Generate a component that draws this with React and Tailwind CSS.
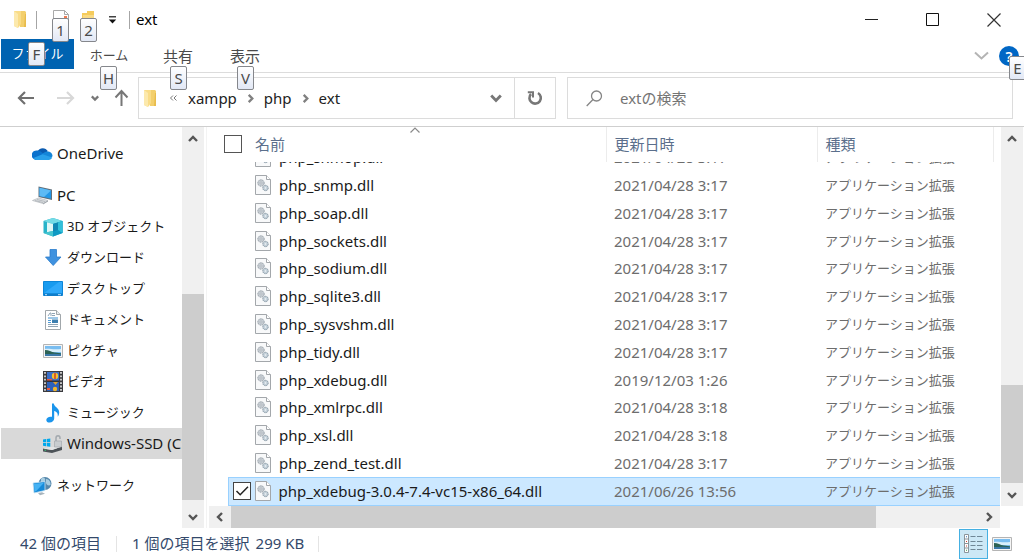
import React from "react";

const KANA = "text-[13px]";

function KeyTip({ children, className }) {
  return (
    <span
      className={`absolute z-10 flex h-6 w-[17px] items-center justify-center rounded-[2px] border border-[#85878c] bg-linear-to-b from-white to-[#e2e8f5] text-[15px] leading-none text-[#4a4a4a] ${className}`}
    >
      {children}
    </span>
  );
}

function Chevron({ dir = "down", size = 10, stroke = 2.4, color = "#555" }) {
  const d = {
    down: "M1 3l4 4 4-4",
    up: "M1 7l4-4 4 4",
    left: "M7 1L3 5l4 4",
    right: "M3 1l4 4-4 4",
  }[dir];
  return (
    <svg width={size} height={size} viewBox="0 0 10 10" fill="none" stroke={color} strokeWidth={stroke} className="overflow-visible">
      <path d={d} />
    </svg>
  );
}

function FolderIcon() {
  return (
    <svg width="15" height="19" viewBox="0 0 15 19" aria-hidden="true">
      <path d="M4 1h8l1 1v15l-6 0z" fill="#f3cf6c" />
      <path d="M12 4h1v13h-2z" fill="#e8bc4c" />
      <path d="M1 1h7v13l-3 4-4-2z" fill="#f9dc88" />
      <path d="M1 1l4 3v14l-4-2z" fill="#fce9ad" />
    </svg>
  );
}

function DllIcon() {
  return (
    <svg width="16" height="20" viewBox="0 0 16 20" aria-hidden="true" className="shrink-0">
      <path d="M.5.5h11l4 4v15H.5z" fill="#f8f9fa" stroke="#a3a7ab" />
      <path d="M11.5.5v4h4" fill="#fff" stroke="#a3a7ab" />
      <circle cx="6" cy="8" r="3.2" fill="#c8ced4" stroke="#97a0a8" strokeDasharray="1.6 .7" />
      <circle cx="6" cy="8" r="1" fill="#f4f6f8" stroke="#97a0a8" strokeWidth=".6" />
      <circle cx="10.5" cy="13" r="2.7" fill="#c3d0d9" stroke="#8797a3" strokeDasharray="1.4 .6" />
      <circle cx="10.5" cy="13" r=".8" fill="#f4f6f8" />
    </svg>
  );
}

function PictureIcon() {
  return (
    <svg width="20" height="16" viewBox="0 0 20 16" aria-hidden="true">
      <path d="M.5 1.5h19v13H.5z" fill="#f5f5f5" stroke="#b4b4b4" />
      <path d="M2 3h16v10H2z" fill="#79bdf0" />
      <path d="M2 6c4-1 7 1 16 0v3H2z" fill="#d9effb" />
      <path d="M2 7c4 0 6 2 10 2.500l6 .8V13H2z" fill="#2c6254" />
      <path d="M2 11c5 0 10-1 16 .3V13H2z" fill="#3a78a8" />
    </svg>
  );
}

const icons = {
  onedrive: (
    <svg width="22" height="15" viewBox="0 0 22 15">
      <path d="M6 5a6 6 0 0 1 10.5 0l-3 4-8-1z" fill="#0a5bb0" />
      <path d="M5.500 4.300a5 5 0 0 1 3.500 1l7 5-12 4A5 5 0 0 1 5.500 4.300z" fill="#0b72cd" />
      <path d="M16.200 5.300c3 0 5.300 2 5.300 5l-3 3-8-5c2-2 3.500-3 5.700-3z" fill="#1485d8" />
      <path d="M1.500 12.300L11 8.200l10.200 3.600c-.6 1.600-2 2.500-3.700 2.500H5c-1.500 0-2.700-.7-3.500-2z" fill="#29a0ea" />
    </svg>
  ),
  pc: (
    <svg width="21" height="19" viewBox="0 0 21 19">
      <path d="M6.500.5L20 3.500V14L6.500 11z" fill="#60707c" />
      <path d="M7.500 1.800L19 4.400v8.300L7.500 10.100z" fill="#2397e6" />
      <path d="M7.500 1.800L19 4.400l-7 6.700-4.500-1z" fill="#5cbaf5" />
      <path d="M.5 14.500l6-2.500 9.500 2.500-5 3z" fill="#dfe2e4" stroke="#b1b6ba" strokeWidth=".7" />
      <path d="M3 14.500l8 2M5 13.500l8 2" stroke="#a5abb0" strokeWidth=".7" />
      <path d="M11 17.500l5-3v1l-5 3z" fill="#9ba2a8" />
    </svg>
  ),
  cube: (
    <svg width="20" height="20" viewBox="0 0 20 20">
      <path d="M.5 4L10 1l9.500 3v12L10 19.500.5 16z" fill="#27b3c9" />
      <path d="M.5 4L10 1l9.500 3L10 7z" fill="#74dbe6" />
      <path d="M10 7l9.500-3v12L10 19.500z" fill="#0f9ac4" />
      <path d="M15 5.500L19.500 4v12L15 13z" fill="#32c0da" />
      <path d="M4 5.200l6 1.800v7l-6 1.300z" fill="#e0f7f6" />
      <path d="M10 7l5-1.500V13l-5 1.500z" fill="#1187b4" />
      <path d="M.5 16L4 15.300l6-1.300v5.500z" fill="#46c5cf" />
    </svg>
  ),
  download: (
    <svg width="20" height="19" viewBox="0 0 20 19">
      <path d="M7 1.500h6.500V9H18l-7.800 8.500L2.500 9H7z" fill="#3f92df" stroke="#2b7ccc" strokeWidth=".8" />
    </svg>
  ),
  desktop: (
    <svg width="20" height="16" viewBox="0 0 20 16">
      <path d="M.5.5h19v14H.5z" fill="#189bef" stroke="#0d86d8" />
      <path d="M1 12L16 1h3v11z" fill="#2fa9fa" />
      <path d="M1 12.500h18V15H1z" fill="#0f7cc9" />
      <path d="M2 13.700h2M15 13.700h3" stroke="#bfe5ff" />
    </svg>
  ),
  document: (
    <svg width="20" height="20" viewBox="0 0 20 20">
      <path d="M2.500.5h11l4 4v15h-15z" fill="#fff" stroke="#a1a7ab" />
      <path d="M13.500.5v4h4" fill="#e9edf0" stroke="#a1a7ab" />
      <path d="M5 6l2-3h1v3M9 3.500h3M9 5.500h3M5 16.500h10M5 14.500h10" stroke="#91a5b5" fill="none" />
      <path d="M5 8h10" stroke="#3b8fd0" />
      <path d="M9 9.500h6V13H9z" fill="#3d7faf" />
      <path d="M5 10.500h3M5 12.500h3" stroke="#4f9ad5" />
    </svg>
  ),
  picture: <PictureIcon />,
  video: (
    <svg width="20" height="21" viewBox="0 0 20 21">
      <path d="M0 0h20v21H0z" fill="#3b3b3f" />
      <path d="M2 1v20M18 1v20" stroke="#d8d8d8" strokeWidth="1.8" strokeDasharray="1.8 1.6" />
      <path d="M4 1h12v9H4z" fill="#3a6fc8" />
      <path d="M4 11h12v9H4z" fill="#2d61bb" />
      <path d="M4 8h5v2H4z" fill="#e9573f" />
      <circle cx="12" cy="5" r="3.2" fill="#f2c12e" />
      <path d="M12 2v6" stroke="#cc3e2e" strokeWidth="1.5" />
      <path d="M4 9.500h12v1.500H4z" fill="#303238" />
      <path d="M10 11h5l-2.500 3z" fill="#e0a02c" />
      <path d="M4 17h3v2H4z" fill="#e9573f" />
      <circle cx="12" cy="18" r="2.2" fill="#f2b62c" />
    </svg>
  ),
  music: (
    <svg width="20" height="20" viewBox="0 0 20 20">
      <path d="M9 .5h1.800c.4 3.500 5.400 4.500 5.400 8.700 0 1.800-.5 3.200-1.500 4.600.5-3.800-1.100-5.300-3.500-5.900v7.600c0 2.300-2 4-4.600 4-2 0-3.300-1-3.300-2.600 0-2.300 2.700-3.700 5.700-3.100z" fill="#1b95ec" />
    </svg>
  ),
  drive: (
    <svg width="21" height="20" viewBox="0 0 21 20">
      <path d="M1 5.500l3-.4v3.200H1zM4.700 5l3.600-.5v3.800H4.700zM1 9h3v3.200l-3-.4zM4.700 9h3.600v3.800l-3.600-.5z" fill="#00a8ec" />
      <path d="M1 14.500l9 1.500 10-3.500V16l-10 3-9-1.500z" fill="#4d5358" />
      <path d="M1 14.500L8 13h5l7-.5L10 16z" fill="#e3e5e6" />
      <path d="M14 7V4c0-3 4-3 4 0v1" fill="none" stroke="#a3a9ae" strokeWidth="1.5" />
      <path d="M12.500 7h7v6h-7z" fill="#c9cdd0" stroke="#9da3a7" strokeWidth=".6" />
      <path d="M2.500 16l1.500.3" stroke="#32d27a" />
    </svg>
  ),
  network: (
    <svg width="21" height="20" viewBox="0 0 21 20">
      <circle cx="13" cy="7.500" r="6.500" fill="#5688ac" />
      <path d="M9 3c3-3 5 0 4 2s-4 2-4 5M14 3c3 0 5 3 4.500 6-2 1-4 0-4.500-2z" fill="#a9cde0" />
      <path d="M1 7l12-1.500v9L2 17z" fill="#168ad8" stroke="#cbe3f2" strokeWidth=".8" />
      <path d="M2 8l10-1.300-8 8.500-1.500.4z" fill="#46b2f3" />
      <path d="M6 17l4-.8 3 1.500-5 1.500z" fill="#a7b4bd" />
    </svg>
  ),
};

const tree = [
  { icon: "onedrive", label: "OneDrive", root: true },
  { icon: "pc", label: "PC", root: true },
  { icon: "cube", label: "3D オブジェクト", kana: true },
  { icon: "download", label: "ダウンロード", kana: true },
  { icon: "desktop", label: "デスクトップ", kana: true },
  { icon: "document", label: "ドキュメント", kana: true },
  { icon: "picture", label: "ピクチャ", kana: true },
  { icon: "video", label: "ビデオ", kana: true },
  { icon: "music", label: "ミュージック", kana: true },
  { icon: "drive", label: "Windows-SSD (C:)", selected: true },
  { icon: "network", label: "ネットワーク", root: true, kana: true },
];

const files = [
  ["php_snmp.dll", "2021/04/28 3:17"],
  ["php_soap.dll", "2021/04/28 3:17"],
  ["php_sockets.dll", "2021/04/28 3:17"],
  ["php_sodium.dll", "2021/04/28 3:17"],
  ["php_sqlite3.dll", "2021/04/28 3:17"],
  ["php_sysvshm.dll", "2021/04/28 3:17"],
  ["php_tidy.dll", "2021/04/28 3:17"],
  ["php_xdebug.dll", "2019/12/03 1:26"],
  ["php_xmlrpc.dll", "2021/04/28 3:18"],
  ["php_xsl.dll", "2021/04/28 3:18"],
  ["php_zend_test.dll", "2021/04/28 3:17"],
];

function TitleBar() {
  return (
    <header className="flex h-[39px] shrink-0 items-center text-black">
      <div className="flex flex-1 items-center pl-[13px]">
        <FolderIcon />
        <span className="ml-2 h-[18px] w-px bg-[#a5a5a5]" />
        <button aria-label="プロパティ" className="relative ml-4 h-[19px] w-4">
          <svg width="16" height="19" viewBox="0 0 16 19">
            <path d="M.5.5h11l4 4v14H.5z" fill="#fff" stroke="#a9a9a9" />
            <path d="M11.500.5v4h4" fill="none" stroke="#a9a9a9" />
            <path d="M11 6h3v2h-3z" fill="#f07b52" />
          </svg>
          <KeyTip className="top-2 -left-px">1</KeyTip>
        </button>
        <button aria-label="新しいフォルダー" className="relative ml-3 h-[19px] w-4">
          <svg width="16" height="19" viewBox="0 0 16 19">
            <path d="M1 3h5V1h7v16H1z" fill="#f5cb5c" />
            <path d="M2 5h11v12H2z" fill="#f9da83" />
          </svg>
          <KeyTip className="top-2 -left-px">2</KeyTip>
        </button>
        <button aria-label="クイック アクセス ツール バーのカスタマイズ" className="ml-[11px]">
          <svg width="9" height="8" viewBox="0 0 9 8">
            <path d="M1 .8h7" stroke="#111" strokeWidth="1.2" />
            <path d="M.8 3.500h7.400L4.500 7.500z" fill="#111" />
          </svg>
        </button>
        <span className="ml-3 h-[18px] w-px bg-[#a5a5a5]" />
        <h1 className="ml-1.5 text-[15px]">ext</h1>
      </div>
      <button aria-label="最小化" className="flex h-full w-[61px] items-center justify-center">
        <svg width="14" height="14" viewBox="0 0 14 14" stroke="#222">
          <path d="M0 6.500h13" />
        </svg>
      </button>
      <button aria-label="最大化" className="flex h-full w-[61px] items-center justify-center">
        <svg width="14" height="14" viewBox="0 0 14 14" stroke="#111" fill="none">
          <path d="M.5.5h12v12H.5z" />
        </svg>
      </button>
      <button aria-label="閉じる" className="flex h-full w-[61px] items-center justify-center">
        <svg width="14" height="14" viewBox="0 0 14 14" stroke="#333" strokeWidth="1.2">
          <path d="M.5.5l13 13M13.500.5l-13 13" />
        </svg>
      </button>
    </header>
  );
}

function RibbonTabs() {
  return (
    <div className="flex h-[34px] shrink-0 items-start border-b border-[#dcdcdc] pl-px text-[#4a4a4a]">
      <button className={`relative flex h-[30px] w-[73px] items-center justify-center bg-[#0063b1] text-white ${KANA}`}>
        ファイル
        <KeyTip className="top-[3px] left-[27px]">F</KeyTip>
      </button>
      <button className={`relative ml-3 flex h-[34px] w-[46px] items-center justify-center ${KANA}`}>
        ホーム
        <KeyTip className="top-[27px] left-[14px]">H</KeyTip>
      </button>
      <button className="relative ml-[23px] flex h-[34px] w-[46px] items-center justify-center text-[15px]">
        共有
        <KeyTip className="top-[27px] left-[15px]">S</KeyTip>
      </button>
      <button className="relative ml-[21px] flex h-[34px] w-[46px] items-center justify-center text-[15px]">
        表示
        <KeyTip className="top-[27px] left-[15px]">V</KeyTip>
      </button>
      <div className="flex-1" />
      <button aria-label="リボンの展開" className="flex h-[34px] items-center">
        <svg width="15" height="10" viewBox="0 0 15 10" fill="none" stroke="#b4b4b4" strokeWidth="2">
          <path d="M1 1.500l6.500 6 6.500-6" />
        </svg>
      </button>
      <button aria-label="ヘルプ" className="relative mr-[5px] ml-2.5 flex h-[34px] items-center">
        <span className="flex h-5 w-5 items-center justify-center rounded-full bg-[#0067c5] text-[15px] leading-none font-semibold text-white">?</span>
        <KeyTip className="top-[17px] left-[10px]">E</KeyTip>
      </button>
    </div>
  );
}

function AddressBar() {
  return (
    <div className="flex h-[54px] shrink-0 items-start border-b border-[#cfcfcf] pt-1 pr-[11px] pl-[17px]">
      <div className="flex h-[42px] w-[121px] shrink-0 items-center">
        <button aria-label="戻る">
          <svg width="18" height="14" viewBox="0 0 18 14" fill="none" stroke="#707070" strokeWidth="2.2">
            <path d="M17 7H2M8 1L2 7l6 6" />
          </svg>
        </button>
        <button aria-label="進む" className="ml-[22px]">
          <svg width="18" height="14" viewBox="0 0 18 14" fill="none" stroke="#d8d8d8" strokeWidth="2.2">
            <path d="M0 7h16M10 1l6 6-6 6" />
          </svg>
        </button>
        <button aria-label="最近表示した場所" className="ml-4">
          <Chevron size={8} color="#777" stroke={2.8} />
        </button>
        <button aria-label="上へ" className="ml-[15px]">
          <svg width="15" height="18" viewBox="0 0 15 18" fill="none" stroke="#777" strokeWidth="2">
            <path d="M7.500 17V2M1.500 8.500l6-6.500 6 6.500" />
          </svg>
        </button>
      </div>
      <div className="grid flex-1 grid-cols-[418fr_446fr] gap-[11px]">
        <div className="flex h-[42px] items-center border border-[#dcdcdc]">
          <nav aria-label="パス" className="flex flex-1 items-center pl-1 text-[15px] text-[#222]">
            <FolderIcon />
            <svg width="9" height="8" viewBox="0 0 9 8" fill="none" stroke="#777" className="ml-[11px]">
              <path d="M4 1.500L1.500 4 4 6.500M7.500 1.500L5 4l2.500 2.500" />
            </svg>
            <a href="#xampp" className="ml-2.5">xampp</a>
            <span className="mx-[9px]"><Chevron dir="right" size={9} color="#808080" stroke={2.6} /></span>
            <a href="#php">php</a>
            <span className="mx-[9px]"><Chevron dir="right" size={9} color="#808080" stroke={2.6} /></span>
            <a href="#ext">ext</a>
          </nav>
          <button aria-label="以前の場所" className="flex h-full w-[37px] items-center justify-center">
            <Chevron size={12} color="#777" stroke={2.4} />
          </button>
          <button aria-label="最新の情報に更新" className="flex h-full w-[41px] items-center justify-center border-l border-[#dcdcdc]">
            <svg width="16" height="16" viewBox="0 0 16 16" fill="none" stroke="#777" strokeWidth="2.6">
              <path d="M11 3a5.700 5.700 0 1 1-7 1" />
              <path d="M.8 2.200H6V7.500" strokeWidth="2" />
            </svg>
          </button>
        </div>
        <label className="flex h-[42px] items-center border border-[#dcdcdc] pl-[18px]">
          <svg width="17" height="17" viewBox="0 0 17 17" fill="none" stroke="#858585" strokeWidth="1.3">
            <circle cx="10.500" cy="6" r="5" />
            <path d="M7 9.500L.7 16" />
          </svg>
          <input
            type="search"
            aria-label="extの検索"
            placeholder="extの検索"
            className="ml-[17px] min-w-0 flex-1 bg-transparent text-[15px] outline-none placeholder:text-[#747474]"
          />
        </label>
      </div>
    </div>
  );
}

function NavTree() {
  return (
    <aside className="flex w-[204px] shrink-0 pl-px">
      <nav aria-label="ナビゲーション" className="flex min-w-0 flex-1 flex-col overflow-hidden pt-[11px]">
        {tree.map((n, i) => (
          <a
            key={n.label}
            href="#folder"
            className={`flex h-[31px] shrink-0 items-center gap-1 whitespace-nowrap ${n.root ? "pl-[31px]" : "pl-[41px]"} ${n.root && i > 0 ? "mt-[11px]" : ""} ${n.selected ? "bg-[#d9d9d9]" : ""} ${n.kana ? KANA : "text-[15px]"} text-[#1a1a1a]`}
          >
            <span className="flex w-[21px] shrink-0 justify-center">{icons[n.icon]}</span>
            {n.label}
          </a>
        ))}
      </nav>
      <div className="flex w-[22px] flex-col bg-[#f0f0f0]">
        <button aria-label="上へスクロール" className="flex h-[23px] items-center justify-center"><Chevron dir="up" /></button>
        <div className="grow-[144]" />
        <div className="grow-[206] bg-[#cdcdcd]" />
        <div className="grow-[5]" />
        <button aria-label="下へスクロール" className="flex h-[23px] items-center justify-center"><Chevron /></button>
      </div>
    </aside>
  );
}

function NameCell({ name }) {
  return (
    <span className="flex items-center gap-2 whitespace-nowrap">
      <DllIcon />
      {name}
    </span>
  );
}

function FileTable() {
  return (
    <table className="h-full w-full table-fixed border-collapse text-left text-[15px] leading-5">
      <colgroup>
        <col className="w-[21px]" />
        <col className="w-[378px]" />
        <col className="w-[211px]" />
        <col className="w-[176px]" />
        <col />
      </colgroup>
      <thead className="text-[#5b6f8c]">
        <tr className="h-[35px]">
          <th colSpan={2} className="relative border-r border-[#ececec] p-0 pb-0.5 font-normal">
            <span className="absolute top-0 left-[51%]">
              <svg width="10" height="6" viewBox="0 0 10 6" fill="none" stroke="#8a8a8a" strokeWidth="1.2">
                <path d="M.5 5.500L5 1l4.500 4.500" />
              </svg>
            </span>
            <span className="flex items-center gap-[13px] pl-[17px]">
              <input type="checkbox" aria-label="すべて選択" className="h-[18px] w-[18px] appearance-none border border-[#555] bg-white" />
              名前
            </span>
          </th>
          <th className="border-r border-[#ececec] p-0 pb-0.5 pl-2 font-normal">更新日時</th>
          <th className="border-r border-[#ececec] p-0 pb-0.5 pl-2 font-normal">種類</th>
          <th className="p-0" />
        </tr>
      </thead>
      <tbody className="text-[#6d6d6d]">
        <tr className="h-[10px]">
          <td className="p-0" />
          <td className="p-0 pl-[27px] text-[#1a1a1a]">
            <div className="flex h-[10px] items-end overflow-hidden pb-[5px]"><NameCell name="php_snmop.dll" /></div>
          </td>
          <td className="p-0 pl-2"><div className="flex h-[10px] items-end overflow-hidden pb-[5px]">2021/04/28 3:17</div></td>
          <td className={`p-0 pl-2 ${KANA}`}><div className="flex h-[10px] items-end overflow-hidden pb-[5px]">アプリケーション拡張</div></td>
          <td className="p-0" />
        </tr>
        {files.map(([name, date]) => (
          <tr key={name} className="h-[27px]">
            <td className="p-0" />
            <td className="p-0 pb-0.5 pl-[27px] text-[#1a1a1a]"><NameCell name={name} /></td>
            <td className="p-0 pb-0.5 pl-2">{date}</td>
            <td className={`p-0 pb-0.5 pl-2 ${KANA}`}>アプリケーション拡張</td>
            <td className="p-0" />
          </tr>
        ))}
        <tr className="h-[27px]">
          <td className="p-0" />
          <td className="border-y border-l border-[#99d1ff] bg-[#cce8ff] p-0 pb-0.5 pl-1 text-[#1a1a1a]">
            <span className="flex items-center gap-1">
              <span className="relative flex">
                <input type="checkbox" defaultChecked aria-label="php_xdebug-3.0.4-7.4-vc15-x86_64.dll" className="h-[18px] w-[18px] appearance-none border border-[#444] bg-white" />
                <svg width="18" height="18" viewBox="0 0 18 18" fill="none" stroke="#222" strokeWidth="1.5" className="pointer-events-none absolute inset-0">
                  <path d="M3.500 9l3.700 3.800L15 4.800" />
                </svg>
              </span>
              <NameCell name="php_xdebug-3.0.4-7.4-vc15-x86_64.dll" />
            </span>
          </td>
          <td className="border-y border-[#99d1ff] bg-[#cce8ff] p-0 pb-0.5 pl-2">2021/06/26 13:56</td>
          <td className={`border-y border-[#99d1ff] bg-[#cce8ff] p-0 pb-0.5 pl-2 ${KANA}`}>アプリケーション拡張</td>
          <td className="border-y border-[#99d1ff] bg-[#cce8ff] p-0" />
        </tr>
      </tbody>
    </table>
  );
}

function StatusBar() {
  return (
    <footer className="flex h-[31px] shrink-0 items-center pr-3 pl-5 text-[15px] text-[#33496b]">
      <span>42 個の項目</span>
      <span className="mx-[15px] h-4 w-px bg-[#e4e4e4]" />
      <span>1 個の項目を選択</span>
      <span className="ml-1.5">299 KB</span>
      <span className="ml-[14px] h-4 w-px bg-[#e4e4e4]" />
      <div className="flex-1" />
      <button aria-label="詳細" className="flex h-[30px] w-[29px] items-center justify-center border border-[#45b0e2] bg-[#cce8f6]">
        <svg width="19" height="19" viewBox="0 0 19 19">
          <path d="M.5.5h4v18h-4z" fill="#fff" stroke="#8a949b" />
          <path d="M.5 5h4M.5 9.500h4M.5 14h4" stroke="#8a949b" />
          <path d="M2 2.300h1v1H2z" fill="#2f70b4" />
          <path d="M2 7h1v1H2zM2 11.500h1v1H2z" fill="#d03c2c" />
          <path d="M2 15.800h1v1H2z" fill="#3b9b48" />
          <path d="M6.500 2.500h5M13 2.500h5.500M6.500 7.500h5M13 7.500h5.500M6.500 11.500h5M13 11.500h5.500M6.500 15.500h5M13 15.500h5.500" stroke="#6f8796" />
        </svg>
      </button>
      <button aria-label="大アイコン" className="ml-1"><PictureIcon /></button>
    </footer>
  );
}

export default function App() {
  return (
    <div className="flex h-screen flex-col overflow-hidden bg-white font-['Noto_Sans','Noto_Sans_CJK_JP',sans-serif]">
      <TitleBar />
      <RibbonTabs />
      <AddressBar />
      <div className="flex min-h-0 flex-1">
        <NavTree />
        <main className="ml-[2px] flex min-w-0 flex-1 flex-col border-l border-[#f3f3f3]">
          <div className="flex min-h-0 flex-1">
            <div className="min-w-0 flex-1 overflow-hidden"><FileTable /></div>
            <div className="mr-px ml-px flex w-[22px] flex-col bg-[#f0f0f0]">
              <button aria-label="上へスクロール" className="flex h-[23px] items-center justify-center"><Chevron dir="up" /></button>
              <div className="grow-[234]" />
              <div className="grow-[98] bg-[#cdcdcd]" />
              <button aria-label="下へスクロール" className="flex h-[23px] items-center justify-center"><Chevron /></button>
            </div>
          </div>
          <div className="mr-6 ml-0.5 flex h-[22px] shrink-0 bg-[#f0f0f0]">
            <button aria-label="左へスクロール" className="flex w-[22px] items-center justify-center"><Chevron dir="left" /></button>
            <div className="grow-[645] bg-[#cdcdcd]" />
            <div className="grow-[102]" />
            <button aria-label="右へスクロール" className="flex w-[22px] items-center justify-center"><Chevron dir="right" /></button>
          </div>
        </main>
      </div>
      <StatusBar />
    </div>
  );
}
